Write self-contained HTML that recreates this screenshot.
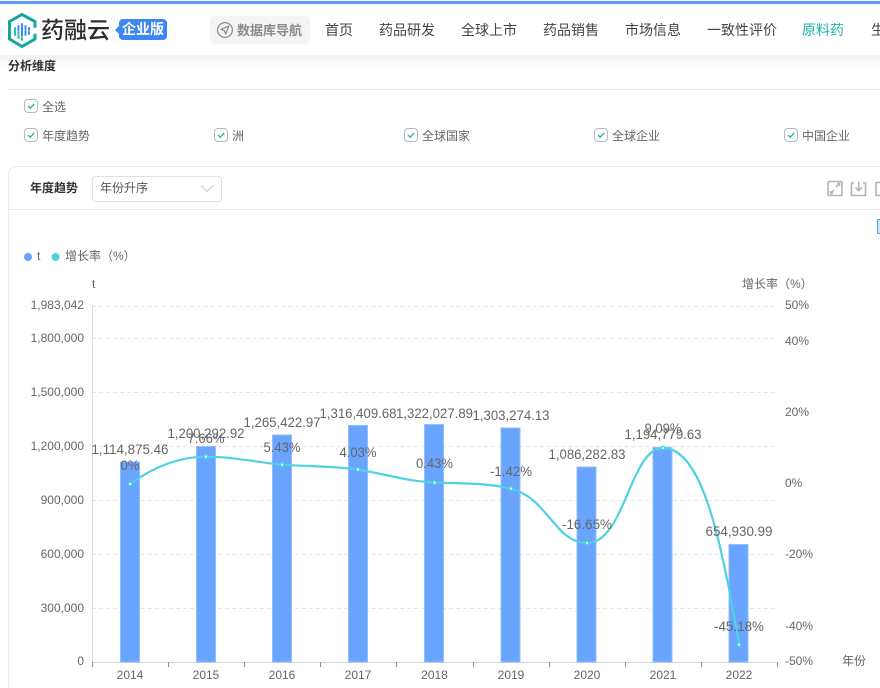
<!DOCTYPE html>
<html><head><meta charset="utf-8">
<style>
html,body{margin:0;padding:0;width:880px;height:688px;overflow:hidden;background:#fff;font-family:"Liberation Sans","Noto Sans CJK SC",sans-serif}
.a{position:absolute;white-space:nowrap}
.nav{top:20px;font-size:14px;line-height:20px;color:#444}
.cb{width:12px;height:12px;border:1px solid #b5b9bc;border-radius:4px;background:#fff}
.cb svg{position:absolute;left:1px;top:1px}
.lb{font-size:12px;line-height:16px;color:#666}
</style></head><body>
<div class="a" style="left:0;top:0;width:880px;height:688px;overflow:hidden">
<div class="a" style="left:0;top:1px;width:880px;height:3px;background:#5f9bfb"></div>
<div class="a" style="left:0;top:55px;width:880px;height:14px;background:linear-gradient(#eff1f1,#fff)"></div>

<svg class="a" style="left:6px;top:12px" width="32" height="37" viewBox="0 0 32 37">
<path d="M16 2.500 L29 9.500 V27 L16 34.500 L3.500 27 V9.500 Z" fill="none" stroke="#17a79c" stroke-width="3" stroke-dasharray="21 6 100"/>
<g stroke-width="2" stroke-linecap="round">
<path d="M9 16v7" stroke="#2cc0b0"/><path d="M12.500 14v4" stroke="#3d86f4"/><path d="M12.500 20v6" stroke="#2cc0b0"/>
<path d="M16 12v12" stroke="#3d86f4"/><path d="M16 26v2" stroke="#2cc0b0"/><path d="M19.500 14v3" stroke="#3d86f4"/><path d="M19.500 19v4" stroke="#3d86f4"/>
<path d="M23 16v2M23 20v2" stroke="#3d86f4"/></g>
</svg>
<div class="a" style="left:41px;top:14px;font-size:23px;line-height:32px;color:#2d2d2d;font-weight:500">药融云</div>
<div class="a" style="left:119px;top:19px;width:48px;height:21px;background:#3d86f4;border-radius:4px;color:#fff;font-size:14px;font-weight:700;line-height:21px;text-align:center">企业版</div>
<div class="a" style="left:115px;top:26px;width:0;height:0;border:4px solid transparent;border-left:0;border-right-color:#3d86f4"></div>

<div class="a" style="left:210px;top:16px;width:100px;height:28px;background:#f3f4f5;border-radius:5px"></div>
<svg class="a" style="left:216px;top:21px" width="18" height="18" viewBox="0 0 18 18" fill="none" stroke="#8a8a8a" stroke-width="1.2"><circle cx="9" cy="9" r="7.400"/><path d="M13 5 L5 8.400 L8.300 9.700 L9.600 13 Z" stroke-linejoin="round"/></svg>
<div class="a" style="left:237px;top:21px;font-size:13px;line-height:20px;font-weight:700;color:#8a8a8a">数据库导航</div>

<div class="a nav" style="left:325px">首页</div>
<div class="a nav" style="left:379px">药品研发</div>
<div class="a nav" style="left:461px">全球上市</div>
<div class="a nav" style="left:543px">药品销售</div>
<div class="a nav" style="left:625px">市场信息</div>
<div class="a nav" style="left:707px">一致性评价</div>
<div class="a nav" style="left:802px;color:#1cb5a3">原料药</div>
<div class="a nav" style="left:871px">生</div>

<div class="a" style="left:8px;top:58px;font-size:12px;line-height:16px;font-weight:700;color:#333">分析维度</div>
<div class="a" style="left:8px;top:89px;width:872px;height:1px;background:#e4e8e8"></div>

<div class="a cb" style="left:24px;top:99px"><svg width="10" height="10" viewBox="0 0 10 10" fill="none" stroke="#1cb5a3" stroke-width="1.3"><path d="M2 5l2.200 2.200L8.200 3"/></svg></div>
<div class="a lb" style="left:42px;top:99px">全选</div>
<div class="a cb" style="left:24px;top:128px"><svg width="10" height="10" viewBox="0 0 10 10" fill="none" stroke="#1cb5a3" stroke-width="1.3"><path d="M2 5l2.200 2.200L8.200 3"/></svg></div>
<div class="a lb" style="left:42px;top:128px">年度趋势</div>
<div class="a cb" style="left:214px;top:128px"><svg width="10" height="10" viewBox="0 0 10 10" fill="none" stroke="#1cb5a3" stroke-width="1.3"><path d="M2 5l2.200 2.200L8.200 3"/></svg></div>
<div class="a lb" style="left:232px;top:128px">洲</div>
<div class="a cb" style="left:404px;top:128px"><svg width="10" height="10" viewBox="0 0 10 10" fill="none" stroke="#1cb5a3" stroke-width="1.3"><path d="M2 5l2.200 2.200L8.200 3"/></svg></div>
<div class="a lb" style="left:422px;top:128px">全球国家</div>
<div class="a cb" style="left:594px;top:128px"><svg width="10" height="10" viewBox="0 0 10 10" fill="none" stroke="#1cb5a3" stroke-width="1.3"><path d="M2 5l2.200 2.200L8.200 3"/></svg></div>
<div class="a lb" style="left:612px;top:128px">全球企业</div>
<div class="a cb" style="left:784px;top:128px"><svg width="10" height="10" viewBox="0 0 10 10" fill="none" stroke="#1cb5a3" stroke-width="1.3"><path d="M2 5l2.200 2.200L8.200 3"/></svg></div>
<div class="a lb" style="left:802px;top:128px">中国企业</div>

<div class="a" style="left:8px;top:166px;width:872px;height:522px;border:1px solid #e8eaf0;border-right:0;border-bottom:0;border-radius:8px 0 0 0;box-sizing:border-box"></div>
<div class="a" style="left:9px;top:209px;width:871px;height:1px;background:#e8eaf0"></div>
<div class="a" style="left:30px;top:180px;font-size:12px;line-height:16px;font-weight:700;color:#333">年度趋势</div>
<div class="a" style="left:92px;top:176px;width:130px;height:26px;box-sizing:border-box;border:1px solid #dcdfe6;border-radius:4px"></div>
<div class="a" style="left:100px;top:180px;font-size:12px;line-height:16px;color:#555">年份升序</div>
<svg class="a" style="left:200px;top:184px" width="14" height="10" fill="none" stroke="#c4c7cc"><path d="M1 1.500l6 6 6-6"/></svg>

<svg class="a" style="left:826px;top:180px" width="54" height="18" viewBox="0 0 54 18" fill="none" stroke="#b4b4b4" stroke-width="1.600">
<rect x="2" y="1.500" width="14" height="14" rx="1"/><path d="M10 7l3.500-3.500M11 3.500h2.500V6M8 10l-3.500 3.500M4.500 11v2.500H7"/>
<path d="M28 3h-2.500v12.500h14V3H37M32.700 1.500v9M29.500 7.500l3.200 3.200 3.200-3.200"/>
<path d="M50 2.500h6v13h-6z"/>
</svg>
<div class="a" style="left:877px;top:219px;width:3px;height:13px;border:1px solid #5aa5d8;border-right:0;background:#cfe5f5"></div>

<svg class="a" style="left:0;top:0" width="880" height="688" viewBox="0 0 880 688" font-family="'Liberation Sans','Noto Sans CJK SC',sans-serif">
<g stroke="#e0e6f1" stroke-dasharray="4 3">
<path d="M92 306.500H777M92 338.500H777M92 392.500H777M92 446.500H777M92 500.500H777M92 554.500H777M92 608.500H777"/>
</g>
<path d="M92.500 306V662" stroke="#d3dfde"/>
<path d="M92 662.500H777" stroke="#cfd8d8"/>
<path d="M92.500 662v5M168.500 662v5M244.500 662v5M320.500 662v5M396.500 662v5M473.500 662v5M549.500 662v5M625.500 662v5M701.500 662v5M777.500 662v5" stroke="#8a9696"/>

<g fill="#69a4ff" stroke="#93bdff" stroke-width="1">
<rect x="120.500" y="462" width="19" height="200"/>
<rect x="196.500" y="446.500" width="19" height="215.500"/>
<rect x="272.500" y="435" width="19" height="227"/>
<rect x="348.500" y="425.500" width="19" height="236.500"/>
<rect x="424.500" y="424.500" width="19" height="237.500"/>
<rect x="501" y="428" width="19" height="234"/>
<rect x="577" y="467" width="19" height="195"/>
<rect x="653" y="447.500" width="19" height="214.500"/>
<rect x="729" y="544.500" width="19" height="117.500"/>
</g>

<path d="M130 484C155 466 180 456.700 206 456.700C232 456.700 255 462 282 464.700C308 466.500 335 466 358 469.600C385 474 408 481.500 434.500 482.500C460 483.500 490 483 511 488.700C548 498 555 543 587 543C625 543 630 448 663 448C700 448 720 530 739 644.700" fill="none" stroke="#4fd2e0" stroke-width="2.200"/>
<g fill="#fff" stroke="#4fd2e0" stroke-width="1.500">
<circle cx="130" cy="484" r="1.800"/><circle cx="206" cy="456.700" r="1.800"/><circle cx="282" cy="464.700" r="1.800"/><circle cx="358" cy="469.600" r="1.800"/><circle cx="434.500" cy="482.500" r="1.800"/><circle cx="511" cy="488.700" r="1.800"/><circle cx="587" cy="543" r="1.800"/><circle cx="663" cy="448" r="1.800"/><circle cx="739" cy="644.700" r="1.800"/>
</g>

<g font-size="14" fill="#666" text-anchor="middle">
<text x="130" y="454" textLength="77" lengthAdjust="spacingAndGlyphs">1,114,875.46</text>
<text x="130" y="470" textLength="19" lengthAdjust="spacingAndGlyphs">0%</text>
<text x="206" y="438" textLength="77" lengthAdjust="spacingAndGlyphs">1,200,292.92</text>
<text x="206" y="443" textLength="37" lengthAdjust="spacingAndGlyphs">7.66%</text>
<text x="282" y="427" textLength="77" lengthAdjust="spacingAndGlyphs">1,265,422.97</text>
<text x="282" y="452" textLength="37" lengthAdjust="spacingAndGlyphs">5.43%</text>
<text x="358" y="418" textLength="77" lengthAdjust="spacingAndGlyphs">1,316,409.68</text>
<text x="358" y="457" textLength="37" lengthAdjust="spacingAndGlyphs">4.03%</text>
<text x="434.500" y="418" textLength="77" lengthAdjust="spacingAndGlyphs">1,322,027.89</text>
<text x="434.500" y="468" textLength="37" lengthAdjust="spacingAndGlyphs">0.43%</text>
<text x="511" y="420" textLength="77" lengthAdjust="spacingAndGlyphs">1,303,274.13</text>
<text x="511" y="476" textLength="42" lengthAdjust="spacingAndGlyphs">-1.42%</text>
<text x="587" y="459" textLength="77" lengthAdjust="spacingAndGlyphs">1,086,282.83</text>
<text x="587" y="529" textLength="50" lengthAdjust="spacingAndGlyphs">-16.65%</text>
<text x="663" y="433" textLength="37" lengthAdjust="spacingAndGlyphs">9.09%</text>
<text x="663" y="439" textLength="77" lengthAdjust="spacingAndGlyphs">1,194,779.63</text>
<text x="739" y="536" textLength="67" lengthAdjust="spacingAndGlyphs">654,930.99</text>
<text x="739" y="631" textLength="50" lengthAdjust="spacingAndGlyphs">-45.18%</text>
</g>

<g font-size="12" fill="#666" text-anchor="end">
<text x="84" y="309">1,983,042</text>
<text x="84" y="342">1,800,000</text>
<text x="84" y="396">1,500,000</text>
<text x="84" y="450">1,200,000</text>
<text x="84" y="504">900,000</text>
<text x="84" y="558">600,000</text>
<text x="84" y="612">300,000</text>
<text x="84" y="665">0</text>
</g>
<g font-size="12" fill="#666" text-anchor="start">
<text x="785" y="309">50%</text>
<text x="785" y="345">40%</text>
<text x="785" y="416">20%</text>
<text x="785" y="487">0%</text>
<text x="785" y="558">-20%</text>
<text x="785" y="630">-40%</text>
<text x="785" y="665">-50%</text>
<text x="842" y="665">年份</text>
<text x="92" y="288">t</text>
<text x="742" y="288">增长率（%）</text>
<text x="37" y="260">t</text>
<text x="65" y="260">增长率（%）</text>
</g>
<g font-size="12" fill="#666" text-anchor="middle">
<text x="130" y="679">2014</text><text x="206" y="679">2015</text><text x="282" y="679">2016</text><text x="358" y="679">2017</text><text x="434.500" y="679">2018</text><text x="511" y="679">2019</text><text x="587" y="679">2020</text><text x="663" y="679">2021</text><text x="739" y="679">2022</text>
</g>
<circle cx="28" cy="257" r="4" fill="#69a4ff"/>
<circle cx="55.500" cy="257" r="4" fill="#4fd2e0"/>
</svg>
</div>
</body></html>
